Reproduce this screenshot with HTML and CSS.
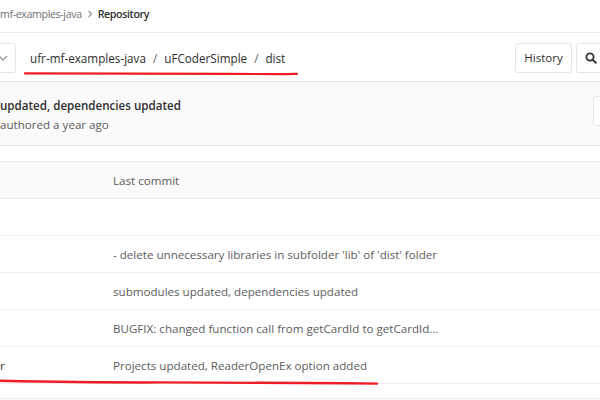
FILE: index.html
```html
<!DOCTYPE html>
<html>
  <head>
    <meta charset="UTF-8">
    <title>dist · ufr-mf-examples-java</title>
    <link rel="stylesheet" href="styles.css">
  </head>
  <body>
    <div class="page">
      <div class="crumbs">
        <span class="crumb-link">mf-examples-java</span>
        <svg class="crumb-sep" width="6" height="8" viewBox="0 0 6 8"><path d="M1.5 1 L4.5 4 L1.5 7" fill="none" stroke="#999" stroke-width="1.2"/></svg>
        <span class="crumb-current">Repository</span>
      </div>

      <div class="toolbar">
        <button class="ref-btn">
          <svg width="10" height="6" viewBox="0 0 10 6"><path d="M1 1 L5 5 L9 1" fill="none" stroke="#9a9a9a" stroke-width="1.3"/></svg>
        </button>
        <div class="path">
          <span>ufr-mf-examples-java</span>
          <span class="slash">/</span>
          <span>uFCoderSimple</span>
          <span class="slash">/</span>
          <span>dist</span>
        </div>
        <button class="btn history">History</button>
        <button class="btn search">
          <svg width="12" height="12" viewBox="0 0 12 12"><circle cx="5" cy="5" r="3.6" fill="none" stroke="#333" stroke-width="1.8"/><path d="M7.6 7.6 L10.8 10.8" stroke="#333" stroke-width="2" stroke-linecap="round"/></svg>
        </button>
      </div>

      <div class="commit">
        <div class="commit-info">
          <div class="commit-title">updated, dependencies updated</div>
          <div class="commit-meta">authored a year ago</div>
        </div>
        <button class="btn sha"></button>
      </div>

      <div class="tree">
        <div class="tree-row head">
          <div class="name"></div>
          <div class="msg">Last commit</div>
        </div>
        <div class="tree-row">
          <div class="name"></div>
          <div class="msg"></div>
        </div>
        <div class="tree-row">
          <div class="name"></div>
          <div class="msg">- delete unnecessary libraries in subfolder 'lib' of 'dist' folder</div>
        </div>
        <div class="tree-row">
          <div class="name"></div>
          <div class="msg">submodules updated, dependencies updated</div>
        </div>
        <div class="tree-row">
          <div class="name"></div>
          <div class="msg">BUGFIX: changed function call from getCardId to getCardId...</div>
        </div>
        <div class="tree-row">
          <div class="name"><span class="file">r</span></div>
          <div class="msg">Projects updated, ReaderOpenEx option added</div>
        </div>
      </div>

      <div class="readme"></div>
    </div>

    <svg class="marks" width="600" height="400" viewBox="0 0 600 400">
      <path d="M25 73.4 C 90 73.8, 160 73.2, 230 73.8 S 290 74.2, 297 73.8" fill="none" stroke="#ee1c24" stroke-width="2.2" stroke-linecap="round"/>
      <path d="M0 380.8 C 40 381.6, 100 382.6, 160 382.4 S 300 382.6, 377 383.6" fill="none" stroke="#ee1c24" stroke-width="2.4" stroke-linecap="round"/>
    </svg>
  </body>
</html>
```

FILE: styles.css
```css
body {
  margin: 0;
  font-family: "Open Sans", "Noto Sans", sans-serif;
  font-size: 11.6px;
  color: #5c5c5c;
  background: #fff;
  overflow: hidden;
}

.page {
  width: 600px;
}

button {
  font-family: inherit;
  background: #fff;
  border: 1px solid #e5e5e5;
  border-radius: 3px;
  cursor: pointer;
}

/* top breadcrumbs */
.crumbs {
  height: 33px;
  border-bottom: 1px solid #ececec;
  display: flex;
  align-items: center;
  gap: 4px;
  padding-bottom: 4px;
  box-sizing: border-box;
  font-size: 10.6px;
  letter-spacing: -0.35px;
}

.crumb-link {
  color: #707070;
}

.crumb-sep {
  margin: 0 1px;
}

.crumb-current {
  color: #2e2e2e;
  font-weight: 600;
}

/* path bar */
.toolbar {
  height: 49px;
  border-bottom: 1px solid #e5e5e5;
  display: flex;
  align-items: center;
  padding-top: 1px;
  box-sizing: border-box;
}

.ref-btn {
  width: 30px;
  height: 30px;
  margin-left: -14px;
  display: flex;
  align-items: center;
  justify-content: center;
  padding: 0 0 0 4px;
}

.path {
  font-size: 11.7px;
  color: #2e2e2e;
  margin-left: 14px;
  display: flex;
  gap: 7px;
  flex: 1;
}

.slash {
  color: #5c5c5c;
}

.btn {
  height: 30px;
  font-size: 11.5px;
  color: #2e2e2e;
}

.history {
  width: 57px;
  padding: 0;
}

.search {
  width: 40px;
  margin-left: 4px;
  margin-right: -16px;
  display: flex;
  align-items: center;
  justify-content: flex-start;
  padding-left: 8px;
}

/* last commit box */
.commit {
  height: 64px;
  background: #fafafa;
  border-bottom: 1px solid #e5e5e5;
  display: flex;
  align-items: flex-start;
  box-sizing: border-box;
}

.commit-info {
  flex: 1;
  line-height: 19px;
  padding-top: 14px;
}

.commit-title {
  font-weight: 600;
  color: #2e2e2e;
}

.commit-meta {
  color: #5c5c5c;
}

.sha {
  width: 40px;
  height: 30px;
  margin-right: -33px;
  margin-top: 14px;
}

/* file table */
.tree {
  margin-top: 15px;
  border-top: 1px solid #ececec;
}

.tree-row {
  display: grid;
  grid-template-columns: 113px 1fr;
  height: 37px;
  align-items: center;
  border-bottom: 1px solid #f0f0f0;
  box-sizing: border-box;
  padding-top: 1px;
}

.tree-row.head {
  background: #fafafa;
  border-bottom-color: #ececec;
}

.file {
  color: #2e2e2e;
}

.readme {
  margin-top: 14px;
  border-top: 1px solid #ececec;
  height: 20px;
}

.marks {
  position: absolute;
  left: 0;
  top: 0;
  pointer-events: none;
}
```
